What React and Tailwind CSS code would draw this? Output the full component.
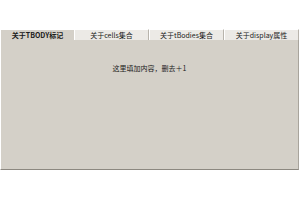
import React from "react";

const tabs = ["关于TBODY标记", "关于cells集合", "关于tBodies集合", "关于display属性"];

export default function App() {
  return (
    <div className="w-[300px] h-[200px] bg-white pt-[29px] font-['Noto_Sans_CJK_SC',sans-serif] text-[7px] text-[#1a1a1a]">
      <div className="flex h-[11px] w-[299px]">
        {tabs.map((t, i) => (
          <div
            key={t}
            className={
              i === 0
                ? "flex-1 flex items-center justify-center bg-[#d4d0c8] font-bold border-t border-l border-white"
                : "flex-1 flex items-center justify-center bg-[#eceae6] border-t border-l border-white border-r border-r-[#b8b4ac]"
            }
          >
            {t}
          </div>
        ))}
      </div>
      <div className="w-[299px] h-[130px] bg-[#d4d0c8] border-l border-white border-r border-r-[#a8a49c] border-b border-b-[#8c8880] flex justify-center pt-[23px]">
        <span>这里填加内容，删去＋1</span>
      </div>
    </div>
  );
}
